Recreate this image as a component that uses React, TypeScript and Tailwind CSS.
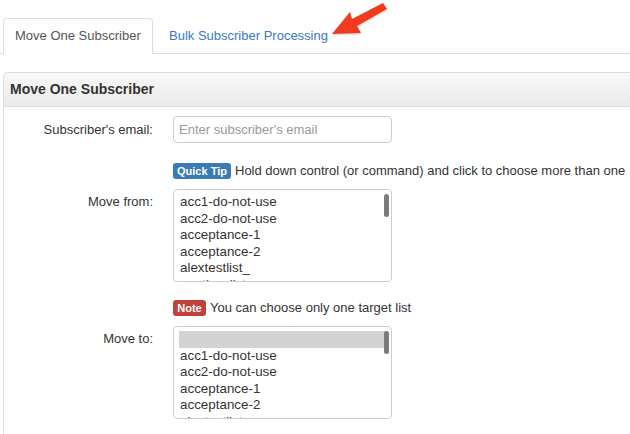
import React from "react";

const fromItems = ["acc1-do-not-use", "acc2-do-not-use", "acceptance-1", "acceptance-2", "alextestlist_", "another-list"];
const toItems = ["acc1-do-not-use", "acc2-do-not-use", "acceptance-1", "acceptance-2", "alextestlist_"];

function ListBox({ items, blankFirst }: { items: string[]; blankFirst?: boolean }) {
  return (
    <div className="relative w-[219px] h-[93px] border border-[#ccc] rounded-[4px] overflow-hidden bg-white">
      <div className="pt-[4px] pl-[5px] pr-[6px] text-[13.4px] leading-[16.5px] text-[#333]">
        {blankFirst && <div className="h-[16.5px] bg-[#d3d3d3] -mr-[2px]"></div>}
        {items.map((t) => (
          <div key={t} className="pl-[1px] whitespace-nowrap">{t}</div>
        ))}
      </div>
      <div className="absolute right-[2px] top-[4px] w-[5px] h-[23px] rounded-full bg-[#7b7b7b]"></div>
    </div>
  );
}

export default function App() {
  return (
    <div
      className="relative w-[630px] h-[434px] overflow-hidden bg-white text-[#333]"
      style={{ fontFamily: '"Liberation Sans", Arial, Helvetica, sans-serif' }}
    >
      {/* Tabs */}
      <div className="pt-[18px] pl-[3px] border-b border-[#ddd] flex text-[13px]">
        <div className="-mb-px h-[36px] w-[150px] border border-[#ddd] border-b-white rounded-t-[4px] bg-white flex items-center pl-[11px] text-[#555]">
          Move One Subscriber
        </div>
        <div className="h-[35px] flex items-center pl-[16px] text-[#3b78c0]">
          Bulk Subscriber Processing
        </div>
      </div>

      {/* Panel */}
      <div className="mt-[18px] ml-[3px] w-[700px] h-[400px] border border-[#ddd] rounded-tl-[4px]">
        <div className="h-[34px] border-b border-[#ddd] bg-gradient-to-b from-[#f7f7f7] to-[#ebebeb] flex items-center pl-[6px] text-[14px] font-bold text-[#333] rounded-tl-[4px]">
          Move One Subscriber
        </div>
        <div className="pt-[9px] text-[13px]">
          {/* Email */}
          <div className="flex items-center">
            <div className="w-[149px] text-right">Subscriber's email:</div>
            <div className="ml-[20px] w-[219px] h-[27px] border border-[#ccc] rounded-[4px] flex items-center pl-[5px] text-[#999]">
              Enter subscriber's email
            </div>
          </div>

          {/* Quick tip */}
          <div className="mt-[20px] ml-[169px] flex items-center h-[16px] whitespace-nowrap">
            <span className="h-[16px] w-[58px] rounded-[3px] bg-[#3a7bb5] text-white font-bold text-[11px] flex items-center justify-center">
              Quick Tip
            </span>
            <span className="ml-[4px]">Hold down control (or command) and click to choose more than one</span>
          </div>

          {/* Move from */}
          <div className="mt-[10px] flex items-start">
            <div className="w-[149px] text-right pt-[5px] leading-[16px]">Move from:</div>
            <div className="ml-[20px]">
              <ListBox items={fromItems} />
            </div>
          </div>

          {/* Note */}
          <div className="mt-[18px] ml-[169px] flex items-center h-[16px] whitespace-nowrap">
            <span className="h-[16px] w-[33px] rounded-[3px] bg-[#c0413b] text-white font-bold text-[11px] flex items-center justify-center">
              Note
            </span>
            <span className="ml-[4px]">You can choose only one target list</span>
          </div>

          {/* Move to */}
          <div className="mt-[10px] flex items-start">
            <div className="w-[149px] text-right pt-[5px] leading-[16px]">Move to:</div>
            <div className="ml-[20px]">
              <ListBox items={toItems} blankFirst />
            </div>
          </div>
        </div>
      </div>

      {/* Red annotation arrow */}
      <svg className="absolute left-0 top-0" width="630" height="60" viewBox="0 0 630 60">
        <polygon
          points="332,34 350,12 352,19 383,3 387,9 357,26 361,33"
          fill="#f23a1f"
          style={{ filter: "drop-shadow(0px 1px 1px rgba(0,0,0,0.2))" }}
        />
      </svg>
    </div>
  );
}
